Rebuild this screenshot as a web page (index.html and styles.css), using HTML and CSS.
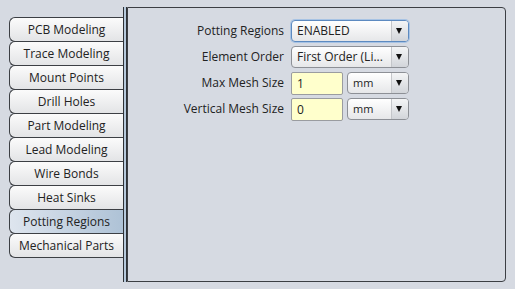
FILE: index.html
```html
<!DOCTYPE html>
<html>
    <head>
        <link rel="stylesheet" href="styles.css">
    </head>
    <body>
        <div class="window">
            <aside class="tabs">
                <ul class="tab-list">
                    <li>PCB Modeling</li>
                    <li>Trace Modeling</li>
                    <li>Mount Points</li>
                    <li>Drill Holes</li>
                    <li>Part Modeling</li>
                    <li>Lead Modeling</li>
                    <li>Wire Bonds</li>
                    <li>Heat Sinks</li>
                    <li class="active">Potting Regions</li>
                    <li>Mechanical Parts</li>
                </ul>
            </aside>
            <div class="divider"></div>
            <div class="panel">
                <form class="settings">
                    <label>Potting Regions</label>
                    <div class="field">
                        <div class="combo focused wide"><span>ENABLED</span><i class="arrow"></i></div>
                    </div>
                    <label>Element Order</label>
                    <div class="field">
                        <div class="combo wide"><span>First Order (Li...</span><i class="arrow"></i></div>
                    </div>
                    <label>Max Mesh Size</label>
                    <div class="field">
                        <input type="text" value="1" class="num">
                        <div class="combo unit"><span>mm</span><i class="arrow"></i></div>
                    </div>
                    <label>Vertical Mesh Size</label>
                    <div class="field">
                        <input type="text" value="0" class="num">
                        <div class="combo unit"><span>mm</span><i class="arrow"></i></div>
                    </div>
                </form>
            </div>
        </div>
    </body>
</html>
```

FILE: styles.css
```css
*, *:after, *:before {
    box-sizing: border-box;
    margin: 0;
    padding: 0;
}
body {
    width: 515px;
    height: 289px;
    background: #d6dae2;
    font-family: "Open Sans", "Noto Sans", sans-serif;
    font-size: 12px;
    color: #222;
    overflow: hidden;
}
.window {
    display: flex;
    padding: 7px 9px 0 0;
    height: 282px;
}
.tabs {
    width: 123px;
    padding: 10px 0 0 9px;
}
.tab-list {
    list-style: none;
}
.tab-list li {
    height: 25px;
    margin-top: -1px;
    line-height: 23px;
    text-align: center;
    border: 1px solid #3c3f44;
    border-right: none;
    border-radius: 6px 0 0 6px;
    background: linear-gradient(#fbfbfb, #e3e4e6);
    white-space: nowrap;
}
.tab-list li:first-child {
    margin-top: 0;
}
.tab-list li.active {
    background: linear-gradient(to right, #dee5ee, #aec2d6);
}
.divider {
    width: 4px;
    border-left: 1px solid #2e3136;
    border-right: 1px solid #2e3136;
    background: #b6c9dc;
}
.panel {
    flex: 1;
    border: 1px solid #3c3f44;
    border-radius: 0 4px 4px 0;
    padding-top: 12px;
}
.settings {
    display: grid;
    grid-template-columns: 156px auto;
    column-gap: 7px;
    row-gap: 4px;
}
.settings label {
    text-align: right;
    line-height: 22px;
    white-space: nowrap;
}
.field {
    display: flex;
    gap: 4px;
    height: 22px;
}
.combo {
    display: flex;
    height: 22px;
    border: 1px solid #8d9096;
    border-radius: 4px;
    background: linear-gradient(#ffffff, #e6e7e9);
    overflow: hidden;
}
.combo span {
    flex: 1;
    padding-left: 5px;
    line-height: 20px;
    white-space: nowrap;
}
.combo.focused {
    border-color: #5d8ac0;
    box-shadow: 0 0 0 1px #a7c3e4;
}
.wide {
    width: 118px;
}
.unit {
    width: 62px;
}
.unit span {
    font-size: 11px;
}
.arrow {
    width: 17px;
    border-left: 1px solid #c4c6ca;
    background: linear-gradient(#f4f5f6, #d2d5da);
    position: relative;
}
.arrow:after {
    content: "";
    position: absolute;
    left: 4px;
    top: 7px;
    border-left: 3.5px solid transparent;
    border-right: 3.5px solid transparent;
    border-top: 6px solid #111;
}
.num {
    width: 52px;
    height: 23px;
    border: 1px solid #9a9ca0;
    border-radius: 2px;
    background: #ffffcc;
    font: inherit;
    color: #222;
    padding-left: 5px;
}
```
